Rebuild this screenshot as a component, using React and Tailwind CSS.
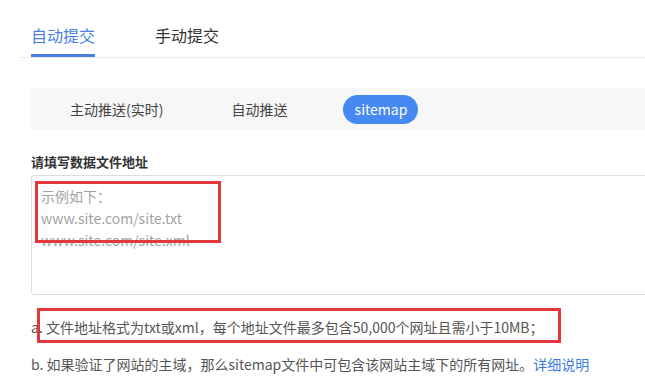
import React from "react";

const subTabs = ["主动推送(实时)", "自动推送", "sitemap"];

export default function App() {
  return (
    <div
      className="relative w-[645px] h-[387px] overflow-hidden bg-white text-[#333]"
      style={{ fontFamily: '"Noto Sans CJK SC", "Noto Sans", sans-serif' }}
    >
      {/* Top tabs */}
      <div className="ml-[20px] w-[700px] pl-[11px] flex border-b border-[#e9e9e9]">
        <div className="pt-[24px] pb-[8px] text-[16px] leading-[22px] text-[#4b7fe2] border-b-[3px] border-[#4b7fe2]">
          自动提交
        </div>
        <div className="ml-[60px] pt-[24px] pb-[11px] text-[16px] leading-[22px] text-[#333]">
          手动提交
        </div>
      </div>

      <div className="pl-[31px]">
        {/* Sub tabs */}
        <div className="mt-[30px] w-[700px] h-[42px] bg-[#f7f7f7] flex items-center pl-[28px]">
          <span className="px-[11px] text-[14px] leading-[28px] text-[#444]">{subTabs[0]}</span>
          <span className="ml-[46px] px-[11px] text-[14px] leading-[28px] text-[#444]">{subTabs[1]}</span>
          <span className="ml-[45px] px-[11px] h-[29px] w-[75px] flex items-center justify-center rounded-full bg-[#4689f2] text-white text-[14px]">
            {subTabs[2]}
          </span>
        </div>

        {/* Label */}
        <div className="mt-[22px] text-[13px] leading-[20px] font-bold text-[#333]">
          请填写数据文件地址
        </div>

        {/* Textarea */}
        <textarea
          readOnly
          className="mt-[3px] block w-[660px] h-[120px] resize-none rounded-[3px] border border-[#dddddd] pl-[9px] pt-[9px] text-[14px] leading-[22px] outline-none placeholder:text-[#a3a3a3]"
          placeholder={"示例如下：\nwww.site.com/site.txt\nwww.site.com/site.xml"}
        />

        {/* Notes */}
        <div className="mt-[13px] text-[14px] leading-[38px] text-[#555] whitespace-nowrap">
          a. 文件地址格式为txt或xml，每个地址文件最多包含50,000个网址且需小于10MB；
        </div>
        <div className="text-[14px] leading-[36px] text-[#555] whitespace-nowrap">
          b. 如果验证了网站的主域，那么sitemap文件中可包含该网站主域下的所有网址。
          <span className="text-[#3b7ddc]">详细说明</span>
        </div>
      </div>

      {/* Red annotation boxes */}
      <div className="absolute left-[35px] top-[181px] w-[186px] h-[62px] border-[3px] border-[#e0383d] pointer-events-none" />
      <div className="absolute left-[37px] top-[308px] w-[524px] h-[35px] border-[3px] border-[#e0383d] pointer-events-none" />
    </div>
  );
}
